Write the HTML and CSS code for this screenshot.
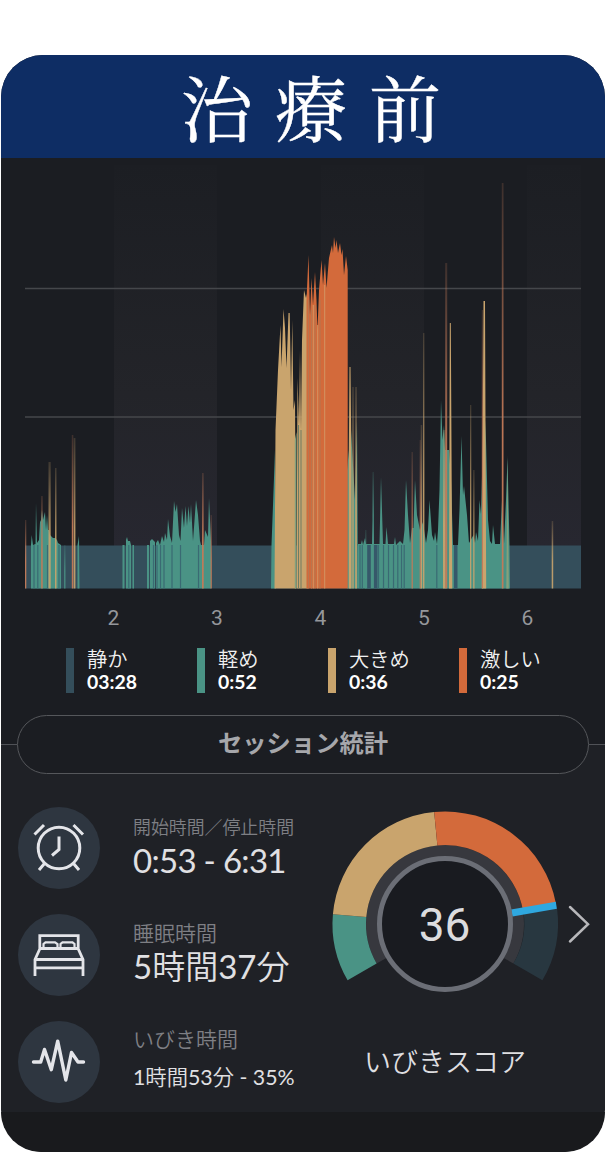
FILE: index.html
```html
<!DOCTYPE html>
<html lang="ja">
<head>
<meta charset="UTF-8">
<meta name="viewport" content="width=device-width, initial-scale=1.0">
<title>治療前</title>
<link rel="stylesheet" href="styles.css">
</head>
<body>
  <div class="card">
    <h1 class="title">治療前</h1>

    <div class="graph">
      <svg class="chart" viewBox="1 158 604 477" width="604" height="477">
        <defs>
          <linearGradient id="hour" x1="0" y1="0" x2="0" y2="1">
            <stop offset="0" stop-color="#1c1e23"/>
            <stop offset="0.6" stop-color="#232429"/>
            <stop offset="1" stop-color="#272730"/>
          </linearGradient>
          <linearGradient id="light-fade" x1="0" y1="0" x2="0" y2="1">
            <stop offset="0" stop-color="#4a9385" stop-opacity="0.15"/>
            <stop offset="0.6" stop-color="#4a9385" stop-opacity="0.8"/>
          </linearGradient>
          <linearGradient id="loud-fade" x1="0" y1="0" x2="0" y2="1">
            <stop offset="0" stop-color="#c9a46d" stop-opacity="0.2"/>
            <stop offset="0.6" stop-color="#c9a46d" stop-opacity="0.9"/>
          </linearGradient>
          <linearGradient id="epic-fade" x1="0" y1="0" x2="0" y2="1">
            <stop offset="0" stop-color="#c47a58" stop-opacity="0.2"/>
            <stop offset="0.6" stop-color="#c47a58" stop-opacity="0.95"/>
          </linearGradient>
        </defs>

        <!-- hour columns -->
        <g fill="url(#hour)">
          <rect x="114" y="165" width="103" height="381"/>
          <rect x="321" y="165" width="103" height="381"/>
          <rect x="527" y="165" width="54" height="381"/>
        </g>
        <path class="gridline" d="M25 288.5H581M25 417H581"/>

        <rect class="quiet" x="25" y="545.5" width="556" height="43"/>

        <!-- light -->
        <g class="light">
          <path d="M31 588.5V545L31.7 535 33 545 35.5 544 36 503 37 543 39 540 40 522 41 520 42 510 43 520 45 512 46 530 47 515 48 530 49 530 50 535 53 538 55 538 57 540 58 543 61 545V588.5Z"/>
          <path d="M77.500 588.500V545L79 536 79.500 588.500ZM122.500 588.500V545H124.500V588.500ZM126 588.5V540L127 537 128 541 130 541 131 545V588.5ZM132.500 588.5V545H134V588.5Z"/>
          <path d="M147 588.5V545H149V588.5ZM150 588.5V541L152 539 155 542V588.5ZM156 588.5V543L158 540 160 545 162 536 164 542 165 533 167 540 168 519 170 536 172 543 174 501 175.500 512 177 504 179 535 180.500 541 182 508 184 528 185.500 506 187 526 188.500 506 190 523 191 504 193 541 196 500 198 515 200 541 201 545 204 545 205 530 208 537 209 498 211 541V588.5Z"/>
          <path d="M271 588.5 271.500 545 273 505 275 450 276 588.5ZM347 588.5V470L351 430 355 500 357 420 358 588.5Z"/>
          <path d="M358 588.5V544L361 544 362 540 363 545 365 538 366 544 372 544 373 520 374 544 379.500 544 381 477 383 544 385.500 544 386.500 527 388 544 394 544 395 537 396 545 400 541 403 544 404.500 530 406 480 408 515 410 543 412 528 413.500 528 415 480 417 515 420 530 423 522 426 543 428 530 429.500 500 432 535 434 541 435 532 437 544 438 530 439.500 490 441 400 442.500 440 444 425 445 450 449 450 451 480 453 545H458L459.500 510 461.500 436 463 495 464 486 467 515 469 543 473.500 535 475 543 476 532 478 541 479.500 500 481 514 481.500 495 484 400 486 440 488 520 490 541 492 544 493 525 495 544 500 544 502 500 504 544 506 500 507.500 458 509.500 545 510 588.5Z"/>
        </g>
        <g fill="url(#light-fade)">
          <rect x="64" y="545" width="1.500" height="43.500"/>
          <rect x="365" y="530" width="1.500" height="58.500"/>
          <rect x="372.400" y="472" width="1.600" height="72"/>
        </g>
        <!-- quiet gaps inside the light area -->
        <g class="gaps">
          <path d="M34 545V588.500M37.800 545V588.500M47.500 545V588.500M59 545V588.500M128.800 545V588.500M153.500 545V588.500M157 545V588.500M160.500 545V588.500M164 545V588.500M172 545V588.500M180.500 545V588.500M198.500 545V588.500"/>
          <path d="M360 545V588.500M362.300 545V588.500M378.500 545V588.500M383.500 545V588.500M388.500 545V588.500M393.500 545V588.500M397.800 545V588.500M401.500 545V588.500M404.200 545V588.500M436.800 545V588.500"/>
        </g>
        <path class="gap-wide" d="M369 545V588.500M375.700 545V588.500M455.700 545V588.500"/>

        <!-- loud -->
        <g class="loud">
          <path d="M274.500 588.500 275.500 430 278 370 280.500 325 281.500 367 283.500 309 285 328 286.500 368 288.500 313 289.700 313 291 390 292.300 320 293.500 410 295 400 296 588.500Z"/>
          <path d="M296.500 588.500 297.500 378 299 425 300 350 301 430 302 340 304 290 306 298 308 290V588.500Z"/>
          <path d="M348.700 588.500V470L349.500 367H350.500L351.500 470V588.500ZM449 588.500 449.800 323H450.800L452.300 588.500ZM481.800 588.500 483.500 301H485L486.200 588.500Z"/>
        </g>
        <g fill="url(#loud-fade)">
          <rect x="48.500" y="462" width="2.200" height="126.500"/>
          <rect x="55" y="468" width="1.500" height="120.500"/>
          <rect x="73.700" y="438" width="1.700" height="150.500"/>
          <rect x="352.300" y="387" width="1.400" height="201.500"/>
          <rect x="355.200" y="387" width="1.700" height="201.500"/>
          <rect x="420.700" y="425" width="1.500" height="163.500"/>
          <rect x="423" y="333" width="1.400" height="255.500"/>
          <rect x="470" y="405" width="1.300" height="183.500"/>
          <rect x="473.200" y="470" width="1.300" height="118.500"/>
          <rect x="443" y="430" width="2.500" height="158.500"/>
          <rect x="551.700" y="521" width="1.500" height="67.500"/>
        </g>
        <path class="mixed" d="M506.300 588.500 507.500 455 508.800 588.500ZM294.800 588.500V440L296.500 432V588.500Z"/>
        <path class="streak" d="M298.500 425V588.500M301 430V588.500"/>

        <!-- epic -->
        <path class="epic" d="M306.500 588.500V300L308.500 255 310 315 311.500 278 313 305 315 272 316.500 300 317.500 330 319 290 321.500 260 323 285 325 263 326.500 288 329 258 332 245 333 253 334 237 335.500 248 336.500 240 338 253 340 243 341.500 255 342.500 249 344 275 346 256 347.700 270V588.500Z"/>
        <g fill="url(#epic-fade)">
          <rect x="25" y="520" width="1.300" height="68.500"/>
          <rect x="41.200" y="496" width="1.500" height="92.500"/>
          <rect x="71.800" y="435" width="1.500" height="153.500"/>
          <rect x="202" y="473" width="1.700" height="115.500"/>
          <rect x="210.600" y="515" width="1.200" height="73.500"/>
          <rect x="411.600" y="452" width="1.200" height="136.500"/>
          <rect x="419.700" y="440" width="1.100" height="148.500"/>
          <rect x="445.200" y="263" width="2" height="325.500"/>
          <rect x="481.800" y="310" width="1.200" height="278.500"/>
          <rect x="501.800" y="183" width="1.700" height="405.500"/>
        </g>
        <path class="tint" d="M308.500 300V588.500M311.500 310V588.500M315 305V588.500M320 300V588.500"/>
        <path class="stripe" d="M317.700 325V588.500M324.700 285V588.500M313.300 305V588.500"/>

        <g class="axis">
          <text x="113.500" y="625">2</text>
          <text x="217" y="625">3</text>
          <text x="320.500" y="625">4</text>
          <text x="424" y="625">5</text>
          <text x="527.500" y="625">6</text>
        </g>
      </svg>

      <div class="legend">
        <div class="legend-item c-quiet"><div>静か</div><b>03:28</b></div>
        <div class="legend-item c-light"><div>軽め</div><b>0:52</b></div>
        <div class="legend-item c-loud"><div>大きめ</div><b>0:36</b></div>
        <div class="legend-item c-epic"><div>激しい</div><b>0:25</b></div>
      </div>
    </div>

    <div class="divider">
      <div class="pill">セッション統計</div>
    </div>

    <div class="stats">
      <div class="rows">
        <div class="row">
          <svg class="icon" viewBox="0 0 82 82">
            <circle cx="41" cy="41" r="20.800"/>
            <path d="M41 29.500V42.500L34 48.500M26.500 56.500 21 63M55.500 56.500 61 63M16.500 27.500 26 18M65 27.500 55.500 18"/>
          </svg>
          <div class="text text-time">
            <div class="label">開始時間／停止時間</div>
            <div class="value">0:53 - 6:31</div>
          </div>
        </div>
        <div class="row">
          <svg class="icon icon-bed" viewBox="0 0 82 82">
            <path d="M21.800 35V21.700H60.200V35M22 34.500H60L65 45.500V62M22 34.500 17 45.500V62M17 45.500H65M17 53.900H65"/>
            <path class="pillow" d="M25.500 34V30L27.500 28.300H37L39.500 30V34M42.500 34V30L44.500 28.300H54.500L56.500 30V34"/>
          </svg>
          <div class="text text-sleep">
            <div class="label">睡眠時間</div>
            <div class="value"><span class="num">5</span>時間<span class="num">37</span>分</div>
          </div>
        </div>
        <div class="row">
          <svg class="icon icon-wave" viewBox="0 0 82 82">
            <path d="M15.500 41H22.700L26.500 28.500 33.300 48.700 39.700 20.200 47.800 59 53.500 31.500 60 41H65.500"/>
          </svg>
          <div class="text text-snore">
            <div class="label">いびき時間</div>
            <div class="value"><span class="num">1</span>時間<span class="num">53</span>分<span class="num"> - 35%</span></div>
          </div>
        </div>
      </div>

      <div class="score">
        <svg class="gauge" viewBox="325 804 276 196" width="276" height="196">
          <!-- inner track -->
          <path fill="#37383e" d="M376.600 963.500A79 79 0 1 1 513.400 963.500L500 956 390 956Z"/>
          <path fill="#4a9385" d="M347.600 980.300A112.500 112.500 0 0 1 332.900 914.200L366.300 917.100A79 79 0 0 0 376.600 963.500Z"/>
          <path fill="#c9a46d" d="M332.900 914.200A112.500 112.500 0 0 1 434.200 812L437.400 845.400A79 79 0 0 0 366.300 917.100Z"/>
          <path fill="#d36a3b" d="M434.200 812A112.500 112.500 0 0 1 555.800 903L523 911A79 79 0 0 0 437.400 845.400Z"/>
          <path fill="#283740" d="M557 908A112.500 112.500 0 0 1 542.400 980.300L513.400 963.500A79 79 0 0 0 523.500 912Z"/>
          <path fill="#2fa8e0" d="M511 909.500 555.800 901.700 556.900 908.700 512.500 916.500Z"/>
          <circle cx="445" cy="924" r="65.500" fill="#191b20" stroke="#6b6e76" stroke-width="5"/>
          <text class="score-value" x="444.500" y="941">36</text>
          <path class="chevron" d="M570 907 588 924.200 570 941.500"/>
        </svg>
        <div class="score-label">いびきスコア</div>
      </div>
    </div>

    <div class="bottom"></div>
  </div>
</body>
</html>
```
FILE: styles.css
```css
body {
  margin: 0;
  background: #ffffff;
  font-family: "Lato", "Noto Sans CJK JP", sans-serif;
  color: #ffffff;
}

.card {
  box-sizing: border-box;
  width: 604px;
  height: 1097px;
  margin: 55px 0 0 1px;
  border-radius: 42px;
  background: #1f2126;
  display: flex;
  flex-direction: column;
}

.title {
  margin: 0;
  height: 103px;
  line-height: 101px;
  border-radius: 42px 42px 0 0;
  background: #0e2d64;
  font-family: "Noto Serif CJK JP", "Noto Serif JP", serif;
  font-weight: 400;
  font-size: 72px;
  letter-spacing: 22px;
  text-indent: 38px;
  text-align: center;
  -webkit-text-stroke: 0.4px #ffffff;
}

/* chart */
.graph {
  height: 557px;
  background: #1b1d22;
}

.chart {
  display: block;
}

.gridline {
  stroke: #45474b;
  stroke-width: 1.6;
}

.quiet { fill: #344e5b; }
.light { fill: #4a9385; }
.loud { fill: #c9a46d; }
.epic { fill: #d36a3b; }
.mixed { fill: #85a07b; }

.gaps {
  stroke: #3a6a73;
  stroke-width: 1.2;
}

.gap-wide {
  stroke: #36586a;
  stroke-width: 3.6;
}

.streak {
  stroke: #6f7d64;
  stroke-width: 1;
}

.tint {
  stroke: #b9764e;
  stroke-width: 1.2;
}

.stripe {
  stroke: #d39a68;
  stroke-width: 0.9;
}

.axis {
  fill: #95979b;
  font-family: "Roboto", sans-serif;
  font-size: 21px;
  text-anchor: middle;
}

.legend {
  display: grid;
  grid-template-columns: repeat(4, 131px);
  margin: 13px 0 0 65px;
}

.legend-item {
  box-sizing: border-box;
  height: 45px;
  border-left: 8px solid;
  padding-left: 13px;
  font-size: 20.3px;
  line-height: 23px;
}

.legend-item div {
  color: #f0f0f0;
  font-weight: 350;
}

.legend-item b {
  display: block;
  color: #ffffff;
  font-size: 19.4px;
  line-height: 21px;
}

.c-quiet { border-color: #344e5b; }
.c-light { border-color: #4a9385; }
.c-loud { border-color: #c9a46d; }
.c-epic { border-color: #d36a3b; }

/* section heading with a line on both sides */
.divider {
  display: flex;
  align-items: center;
  height: 59px;
  background: linear-gradient(#1b1d22 50%, #1f2126 50%);
}

.divider::before,
.divider::after {
  content: "";
  height: 1px;
  background: #505257;
  flex: 1;
}

.pill {
  box-sizing: border-box;
  width: 572px;
  height: 59px;
  line-height: 54px;
  border: 1px solid #55575b;
  border-radius: 30px;
  background: #1b1d22;
  color: #a6a7ab;
  font-size: 24.3px;
  font-weight: 700;
  text-align: center;
}

/* stats */
.stats {
  display: flex;
  height: 338px;
}

.rows {
  width: 324px;
  padding: 33px 0 0 17px;
  box-sizing: border-box;
  display: flex;
  flex-direction: column;
  gap: 25px;
}

.row {
  display: flex;
  gap: 33px;
  height: 82px;
}

.icon {
  flex: none;
  width: 82px;
  height: 82px;
  border-radius: 50%;
  background: #2e3640;
  fill: none;
  stroke: #e4e5e9;
  stroke-width: 3;
}

.icon-bed {
  stroke-width: 2.8;
}

.pillow {
  stroke-width: 2.2;
}

.icon-wave {
  stroke-width: 3.4;
  stroke-linecap: round;
  stroke-linejoin: round;
}

.text {
  white-space: nowrap;
}

.label {
  color: #7e7f84;
  font-weight: 350;
  font-size: 21px;
  line-height: 30px;
}

.value {
  color: #e0e0e3;
  font-weight: 350;
  font-size: 33px;
  line-height: 36px;
}

.num {
  font-weight: 400;
}

.text-time .label {
  font-size: 17.9px;
  padding-top: 5px;
}

.text-time .value {
  font-weight: 400;
  letter-spacing: -0.7px;
}

.text-sleep .label {
  padding-top: 4px;
}

.text-snore .label {
  padding-top: 3px;
}

.text-snore .value {
  font-size: 21.3px;
  line-height: 46px;
}

.score {
  flex: 1;
}

.gauge {
  display: block;
  margin-top: 30px;
}

.score-value {
  fill: #dcdcde;
  font-family: "Roboto", sans-serif;
  font-size: 46px;
  text-anchor: middle;
}

.chevron {
  fill: none;
  stroke: #b8b8bb;
  stroke-width: 2.5;
  stroke-linecap: round;
}

.score-label {
  margin-top: 42px;
  width: 240px;
  text-align: center;
  font-weight: 350;
  font-size: 27px;
  line-height: 40px;
  color: #dedee0;
}

.bottom {
  flex: 1;
  border-radius: 0 0 42px 42px;
  background: linear-gradient(#191a1d, #191a1d);
}

.card {
  background: linear-gradient(#1f2126 1057px, #191a1d 1057px);
}
```
